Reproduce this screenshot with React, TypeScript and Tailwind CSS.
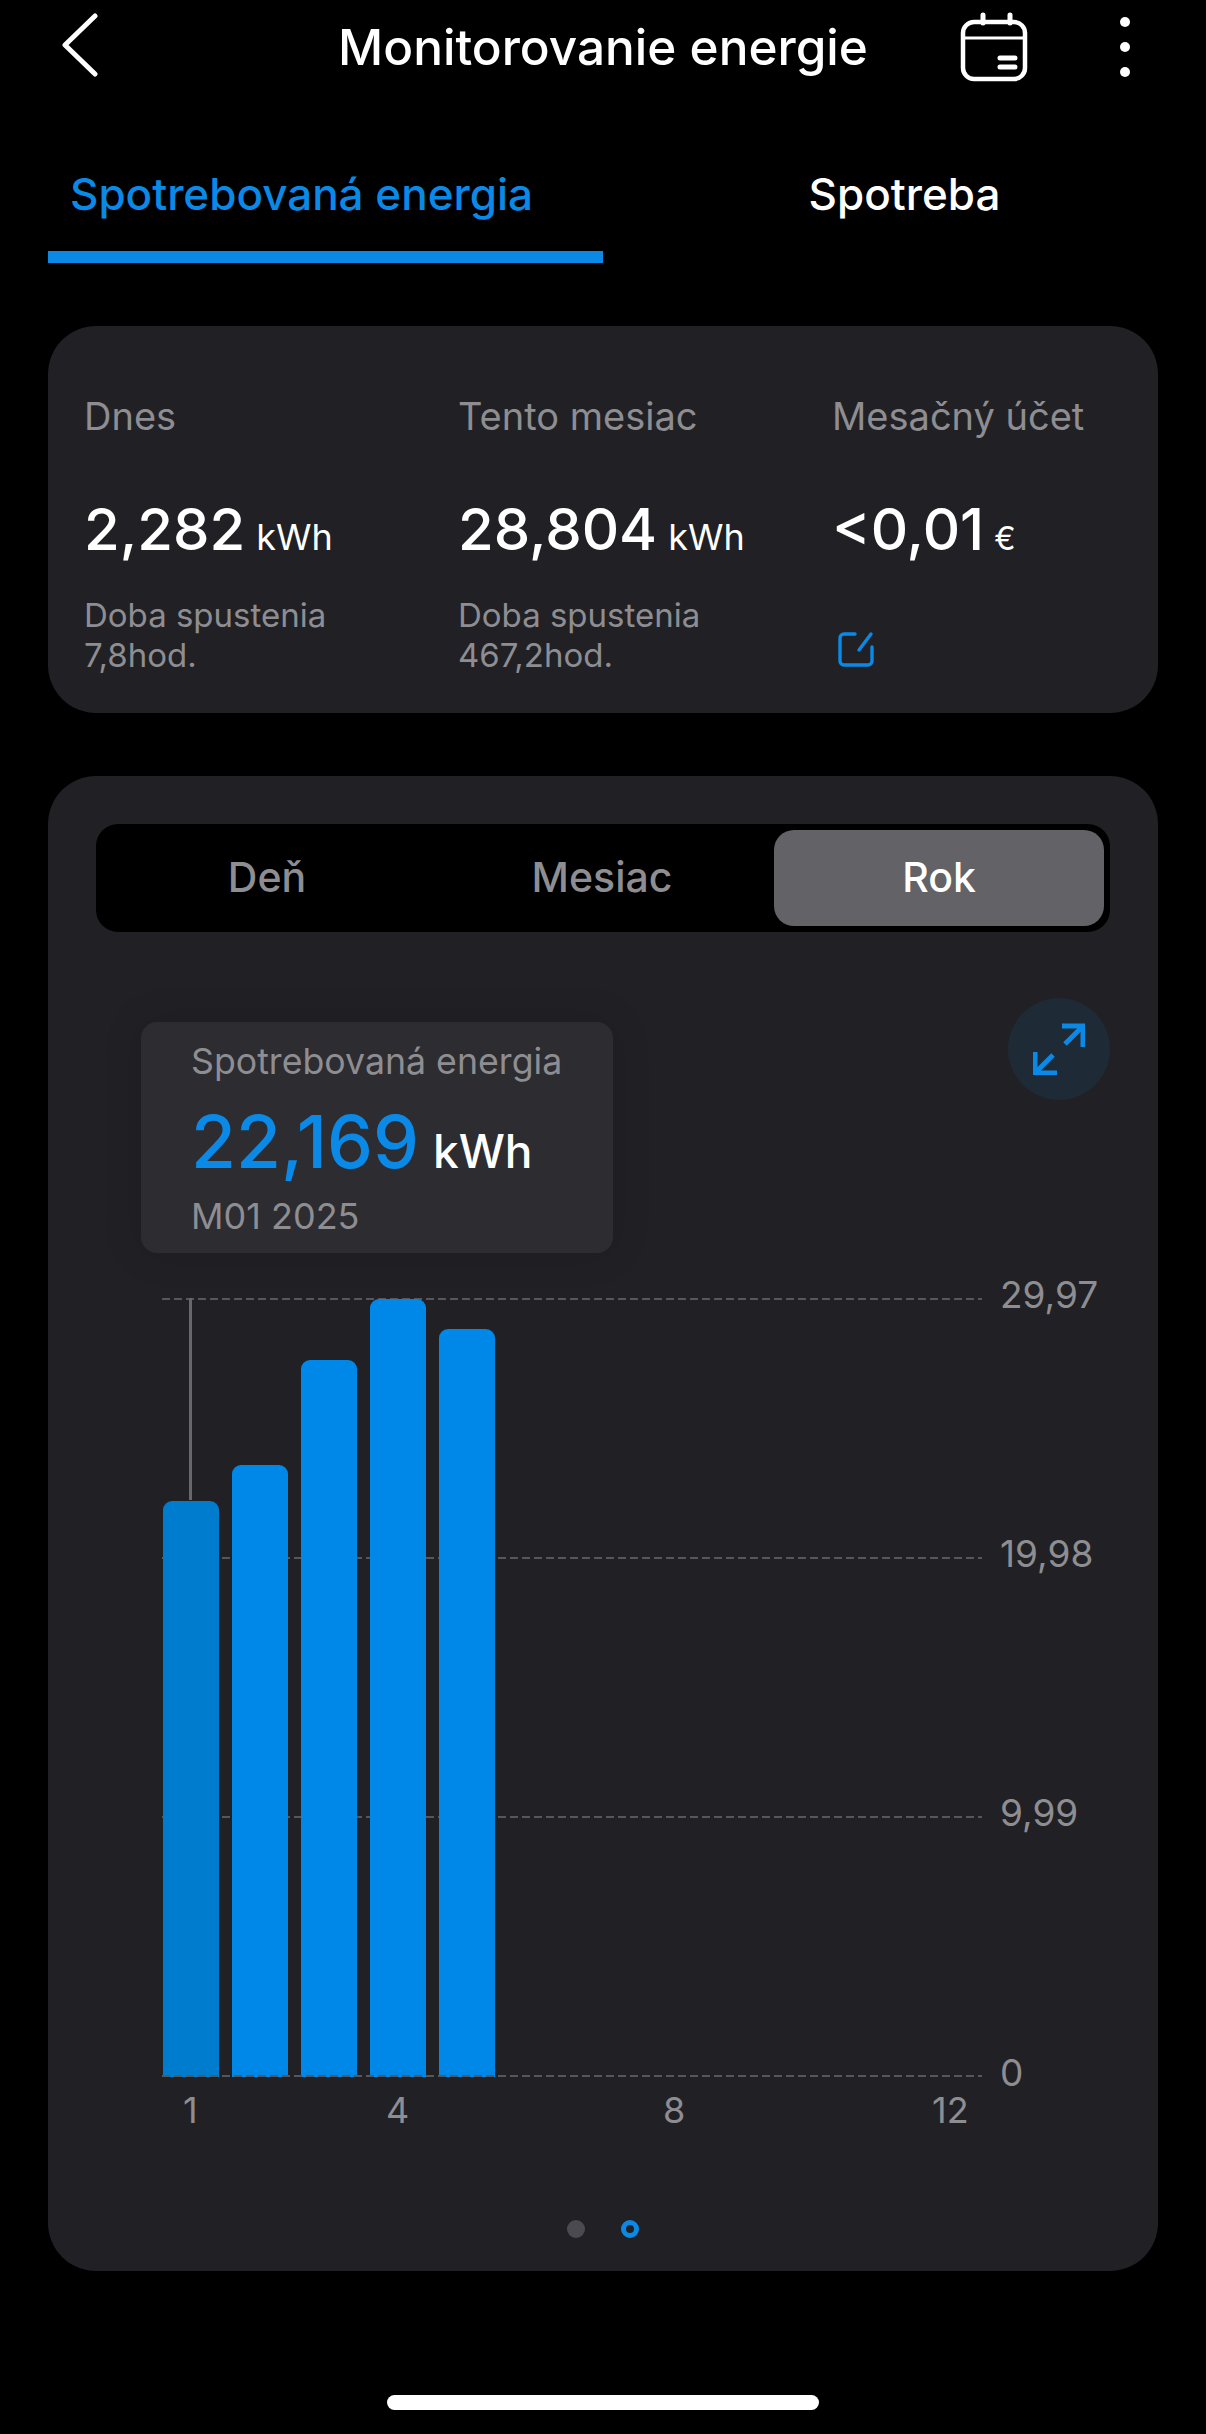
const bars = [576, 612, 717, 778, 748];
const yLabels = ["29,97", "19,98", "9,99"];

function Stat(props: { label: string; value: string; unit: string; lines?: string[] }) {
  const { label, value, unit, lines } = props;
  return (
    <div>
      <div className="text-[38px] leading-[44px] whitespace-nowrap text-[#8e8e92]">{label}</div>
      <div className="mt-[65px] flex h-[52px] items-baseline whitespace-nowrap text-white">
        <span className="text-[58px] leading-[52px] font-medium">{value}</span>
        <span className={unit === "€" ? "ml-[10px] text-[32px]" : "ml-[11px] text-[36px]"}>{unit}</span>
      </div>
      {lines ? (
        <div className="mt-[40px] text-[33px] leading-[40px] text-[#8e8e92]">
          {lines.map((l) => (
            <div key={l}>{l}</div>
          ))}
        </div>
      ) : (
        <svg className="mt-[76px] ml-[6px] h-[36px] w-[36px]" viewBox="0 0 36 36" fill="none" stroke="#0a8ae6" strokeWidth="3.4" strokeLinecap="round" strokeLinejoin="round">
          <path d="M17 3H6a4 4 0 0 0-4 4v23a4 4 0 0 0 4 4h24a4 4 0 0 0 4-4V16" />
          <path d="M33 3 21 19" />
        </svg>
      )}
    </div>
  );
}

function DashLine() {
  return <div className="h-[2px] flex-1 bg-[repeating-linear-gradient(90deg,#57575b_0_8px,transparent_8px_12px)]" />;
}

export default function App() {
  return (
    <div className="flex h-[2434px] w-[1206px] flex-col overflow-hidden bg-black font-['Inter',sans-serif]">
      <div className="grid h-[94px] grid-cols-[1fr_auto_1fr] items-center text-white">
        <svg className="mb-[4px] ml-[60px] h-[64px] w-[38px]" viewBox="0 0 38 64" fill="none" stroke="white" strokeWidth="5" strokeLinecap="round" strokeLinejoin="round">
          <path d="M35 3 5 32 35 61" />
        </svg>
        <div className="mb-[1px] text-[49.5px] leading-[60px] font-medium">Monitorovanie energie</div>
        <div className="flex items-center justify-end">
          <svg className="mb-[1px] h-[70px] w-[68px]" viewBox="0 0 68 70" fill="none" stroke="white" strokeLinecap="round">
            <rect x="3" y="10" width="62" height="57" rx="11" strokeWidth="4.5" />
            <path d="M3 26h62" strokeWidth="3" />
            <path d="M23 3v8M50 3v8" strokeWidth="5" />
            <path d="M40 46h15M40 55h15" strokeWidth="5" />
          </svg>
          <div className="mr-[76px] ml-[92px] flex flex-col gap-[15px]">
            <span className="h-[10px] w-[10px] rounded-full bg-white" />
            <span className="h-[10px] w-[10px] rounded-full bg-white" />
            <span className="h-[10px] w-[10px] rounded-full bg-white" />
          </div>
        </div>
      </div>

      <div className="grid grid-cols-2 pt-[70px] text-center text-[44px] leading-[60px] font-medium">
        <div>
          <div className="text-[#0a8ae6]">Spotrebovaná energia</div>
          <div className="mt-[27px] ml-[48px] h-[12px] bg-[#0a8ae6]" />
        </div>
        <div className="text-white">Spotreba</div>
      </div>

      <div className="mx-[48px] mt-[63px] grid h-[387px] grid-cols-[374px_374px_1fr] rounded-[48px] bg-[#212125] pt-[68px] pl-[36px]">
        <Stat label="Dnes" value="2,282" unit="kWh" lines={["Doba spustenia", "7,8hod."]} />
        <Stat label="Tento mesiac" value="28,804" unit="kWh" lines={["Doba spustenia", "467,2hod."]} />
        <Stat label="Mesačný účet" value="<0,01" unit="€" />
      </div>

      <div className="mx-[48px] mt-[63px] flex h-[495px] grow flex-col rounded-[48px] bg-[#212125] px-[48px] pt-[48px]">
        <div className="flex h-[108px] items-center rounded-[22px] bg-black p-[6px] text-[41px] font-medium text-[#8e8e92]">
          <div className="w-[330px] text-center">Deň</div>
          <div className="w-[340px] text-center">Mesiac</div>
          <div className="ml-[2px] flex h-full grow items-center justify-center rounded-[20px] bg-[#636367] text-white">Rok</div>
        </div>

        <div className="relative mt-[66px] flex flex-col">
          <div className="flex justify-end">
            <div className="flex h-[102px] w-[102px] items-center justify-center rounded-full bg-[#1e2a35]">
              <svg className="h-[52px] w-[52px]" viewBox="0 0 52 52" fill="none" stroke="#0a8ae6" strokeWidth="5">
                <path d="M29 3h21v21" />
                <path d="M49 4 32 21" />
                <path d="M2 29v21h22" />
                <path d="M3 49l17-17" />
              </svg>
            </div>
          </div>

          <div className="relative mt-[198px] ml-[66px] h-[779px]">
            <div className="absolute inset-0 flex flex-col justify-between">
              {yLabels.map((t) => (
                <div key={t} className="flex h-[2px] items-center">
                  <DashLine />
                  <span className="mb-[9px] w-[128px] pl-[18px] text-[37px] text-[#8e8e92]">{t}</span>
                </div>
              ))}
              <div className="h-[2px]" />
            </div>

            <div className="relative flex h-full items-end gap-[13px] pl-[1px]">
              {bars.map((h, i) => (
                <div
                  key={i}
                  className={i === 0 ? "w-[56px] rounded-t-[9px] bg-[#007ccf]" : "w-[56px] rounded-t-[9px] bg-[#0088e8]"}
                  style={{ height: h }}
                />
              ))}
            </div>

            <div className="absolute right-0 bottom-0 left-0 flex h-[2px] items-center">
              <DashLine />
              <span className="mb-[7px] w-[128px] pl-[18px] text-[37px] text-[#8e8e92]">0</span>
            </div>

            <div className="absolute top-0 left-[27px] h-[202px] w-[3px] bg-[#68686c]" />

            <div className="flex h-[65px] items-center text-[36px] text-[#8e8e92]">
              <span className="ml-[21px] w-[203px]">1</span>
              <span className="w-[277px]">4</span>
              <span className="w-[269px]">8</span>
              <span>12</span>
            </div>
          </div>

          <div className="absolute top-[24px] left-[45px] h-[231px] w-[472px] rounded-[16px] bg-[#2c2c31] pt-[18px] pl-[50px] shadow-[0_0_40px_rgba(0,0,0,0.12)]">
            <div className="text-[35.7px] leading-[42px] whitespace-nowrap text-[#8e8e92]">Spotrebovaná energia</div>
            <div className="mt-[22px] flex h-[76px] items-baseline whitespace-nowrap">
              <span className="text-[73px] leading-[76px] font-medium text-[#0a8ae6]">22,169</span>
              <span className="ml-[14px] text-[46px] font-medium text-white">kWh</span>
            </div>
            <div className="mt-[15px] text-[36px] leading-[42px] text-[#8e8e92]">M01 2025</div>
          </div>
        </div>

        <div className="mt-[143px] flex justify-center gap-[36px]">
          <span className="h-[18px] w-[18px] rounded-full bg-[#4a4a50]" />
          <span className="h-[18px] w-[18px] rounded-full border-[5px] border-[#0a8ae6]" />
        </div>
      </div>

      <div className="flex h-[163px] items-start justify-center pt-[124px]">
        <div className="h-[15px] w-[432px] rounded-full bg-white" />
      </div>
    </div>
  );
}
